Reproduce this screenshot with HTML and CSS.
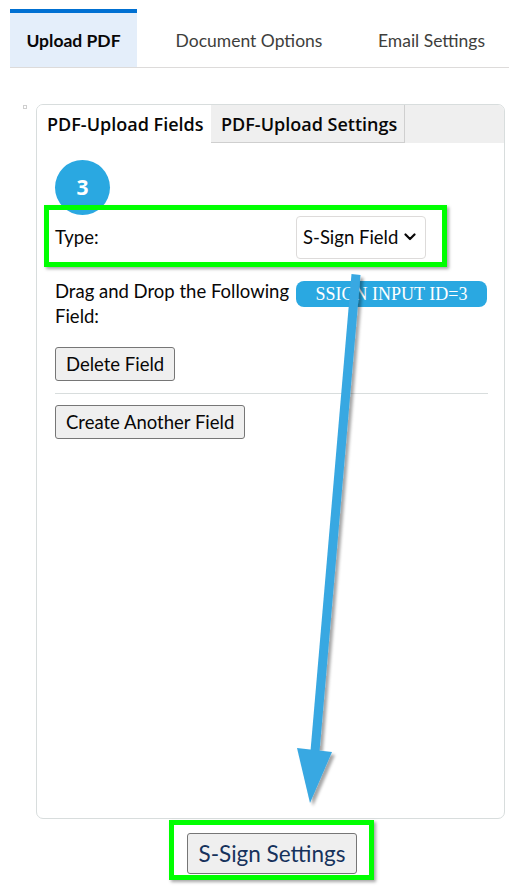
FILE: index.html
```html
<!DOCTYPE html>
<html lang="en">
<head>
    <title>S-Sign PDF Upload</title>
    <link rel="stylesheet" href="styles.css">
</head>
<body>
    <div class="top-tabs">
        <div class="top-tab active">Upload PDF</div>
        <div class="top-tab tab-doc">Document Options</div>
        <div class="top-tab tab-mail">Email Settings</div>
    </div>

    <div class="main">
        <span class="dot"></span>
        <div class="panel">
            <div class="panel-tabs">
                <div class="panel-tab current">PDF-Upload Fields</div>
                <div class="panel-tab other">PDF-Upload Settings</div>
            </div>
            <div class="panel-body">
                <div class="step">3</div>
                <div class="type-row">
                    <span>Type:</span>
                    <div class="fake-select">
                        S-Sign Field
                        <svg width="12" height="8" viewBox="0 0 12 8"><path d="M1.5 1.5 L6 6 L10.5 1.5" fill="none" stroke="#080707" stroke-width="2.2" stroke-linecap="round" stroke-linejoin="round"/></svg>
                    </div>
                </div>
                <div class="drag-row">
                    <span class="drag-text">Drag and Drop the Following Field:</span>
                    <span class="pill">SSIGN INPUT ID=3</span>
                </div>
                <button class="btn">Delete Field</button>
                <hr>
                <button class="btn">Create Another Field</button>
            </div>
        </div>
    </div>

    <div class="footer">
        <div class="footer-box">
            <button class="btn big">S-Sign Settings</button>
        </div>
    </div>

    <svg class="arrow" width="509" height="888" viewBox="0 0 509 888">
        <defs>
            <filter id="shade" x="-20%" y="-5%" width="160%" height="115%">
                <feDropShadow dx="3" dy="3" stdDeviation="1.5" flood-color="#000" flood-opacity="0.35"/>
            </filter>
        </defs>
        <g filter="url(#shade)" fill="#38a8e2">
            <polygon points="351.5,274 360.5,275 319.5,752 310.5,751"/>
            <polygon points="297,748 332,752 310,803"/>
        </g>
    </svg>
</body>
</html>
```

FILE: styles.css
```css
body {
    margin: 0;
    font-family: "Lato", "Noto Sans", sans-serif;
    color: #080707;
    background: white;
    position: relative;
    width: 509px;
    height: 888px;
    overflow: hidden;
}

.top-tabs {
    display: flex;
    margin: 9px 0 0 10px;
    height: 58px;
    border-bottom: 1px solid #dddbda;
}
.top-tab {
    display: flex;
    align-items: center;
    justify-content: center;
    font-size: 17.5px;
    color: #3e3e3c;
    padding-top: 4px;
    box-sizing: border-box;
}
.top-tab.active {
    width: 127px;
    background-color: #e4eefa;
    border-top: 4px solid #0070d2;
    padding-top: 0;
    font-weight: bold;
    color: #080707;
}
.tab-doc {
    width: 224px;
}
.tab-mail {
    width: 141px;
}

.main {
    display: flex;
    padding-top: 36px;
}
.dot {
    width: 2px;
    height: 2px;
    border: 1px solid #cfcfcf;
    margin: 1px 9px 0 23px;
}
.panel {
    width: 469px;
    height: 715px;
    border: 1px solid #d8dddd;
    border-radius: 7px;
    box-sizing: border-box;
    overflow: hidden;
}
.panel-tabs {
    display: flex;
    height: 38px;
    background-color: #efefef;
}
.panel-tab {
    font-family: "Open Sans", "Noto Sans", sans-serif;
    font-weight: 600;
    font-size: 18px;
    padding: 0 10px;
    display: flex;
    align-items: center;
    box-sizing: border-box;
    white-space: nowrap;
}
.panel-tab.current {
    width: 174px;
    background-color: white;
}
.panel-tab.other {
    width: 194px;
    border-right: 1px solid #cfcfcf;
    border-bottom: 1px solid #cfcfcf;
}

.panel-body {
    position: relative;
    padding: 69px 16px 0 18px;
}
.step {
    position: absolute;
    left: 18px;
    top: 17px;
    width: 55px;
    height: 55px;
    border-radius: 50%;
    background-color: #2aa8e1;
    color: white;
    font-family: "Open Sans", sans-serif;
    font-weight: bold;
    font-size: 21px;
    display: flex;
    align-items: center;
    justify-content: center;
    padding-bottom: 2px;
    box-sizing: border-box;
}
.type-row {
    position: relative;
    display: flex;
    align-items: center;
    height: 50px;
    font-size: 18.5px;
}
.type-row::after {
    content: "";
    position: absolute;
    left: -11px;
    top: -7px;
    width: 403px;
    height: 62px;
    box-sizing: border-box;
    border: 5px solid #00ff00;
    box-shadow: 2px 2px 3px rgba(0, 0, 0, 0.35);
}
.type-row span {
    width: 241px;
}
.fake-select {
    display: flex;
    align-items: center;
    gap: 6px;
    height: 43px;
    padding: 0 9px 0 6px;
    border: 1px solid #dddbda;
    border-radius: 4px;
    background-color: white;
    box-sizing: border-box;
    font-size: 18.5px;
}

.drag-row {
    display: flex;
    align-items: flex-start;
    margin-top: 17px;
    font-size: 18.5px;
    line-height: 25px;
}
.drag-text {
    width: 241px;
}
.pill {
    margin-top: 2px;
    width: 191px;
    height: 26px;
    background-color: #2aa8e1;
    color: white;
    border-radius: 8px;
    font-family: "Liberation Serif", serif;
    font-size: 18px;
    text-align: center;
    line-height: 26px;
}

.btn {
    font-family: "Lato", "Noto Sans", sans-serif;
    font-size: 18.5px;
    color: #080707;
    background-color: #efefef;
    border: 1px solid #767676;
    border-radius: 3px;
    padding: 0 10px;
    height: 34px;
    display: block;
}
.drag-row + .btn {
    margin-top: 18px;
}
hr {
    border: none;
    border-top: 1px solid #d8dddd;
    margin: 12px 0 11px;
}

.footer {
    width: 469px;
    margin-left: 37px;
    display: flex;
    justify-content: center;
    padding-top: 1px;
}
.footer-box {
    padding: 8px 12px 1px 13px;
    border: 5px solid #00ff00;
    box-shadow: 2px 2px 3px rgba(0, 0, 0, 0.35);
}
.btn.big {
    height: 41px;
    font-size: 22.5px;
    color: #16325c;
    padding: 0 11px;
}

.arrow {
    position: absolute;
    left: 0;
    top: 0;
    pointer-events: none;
}
```
